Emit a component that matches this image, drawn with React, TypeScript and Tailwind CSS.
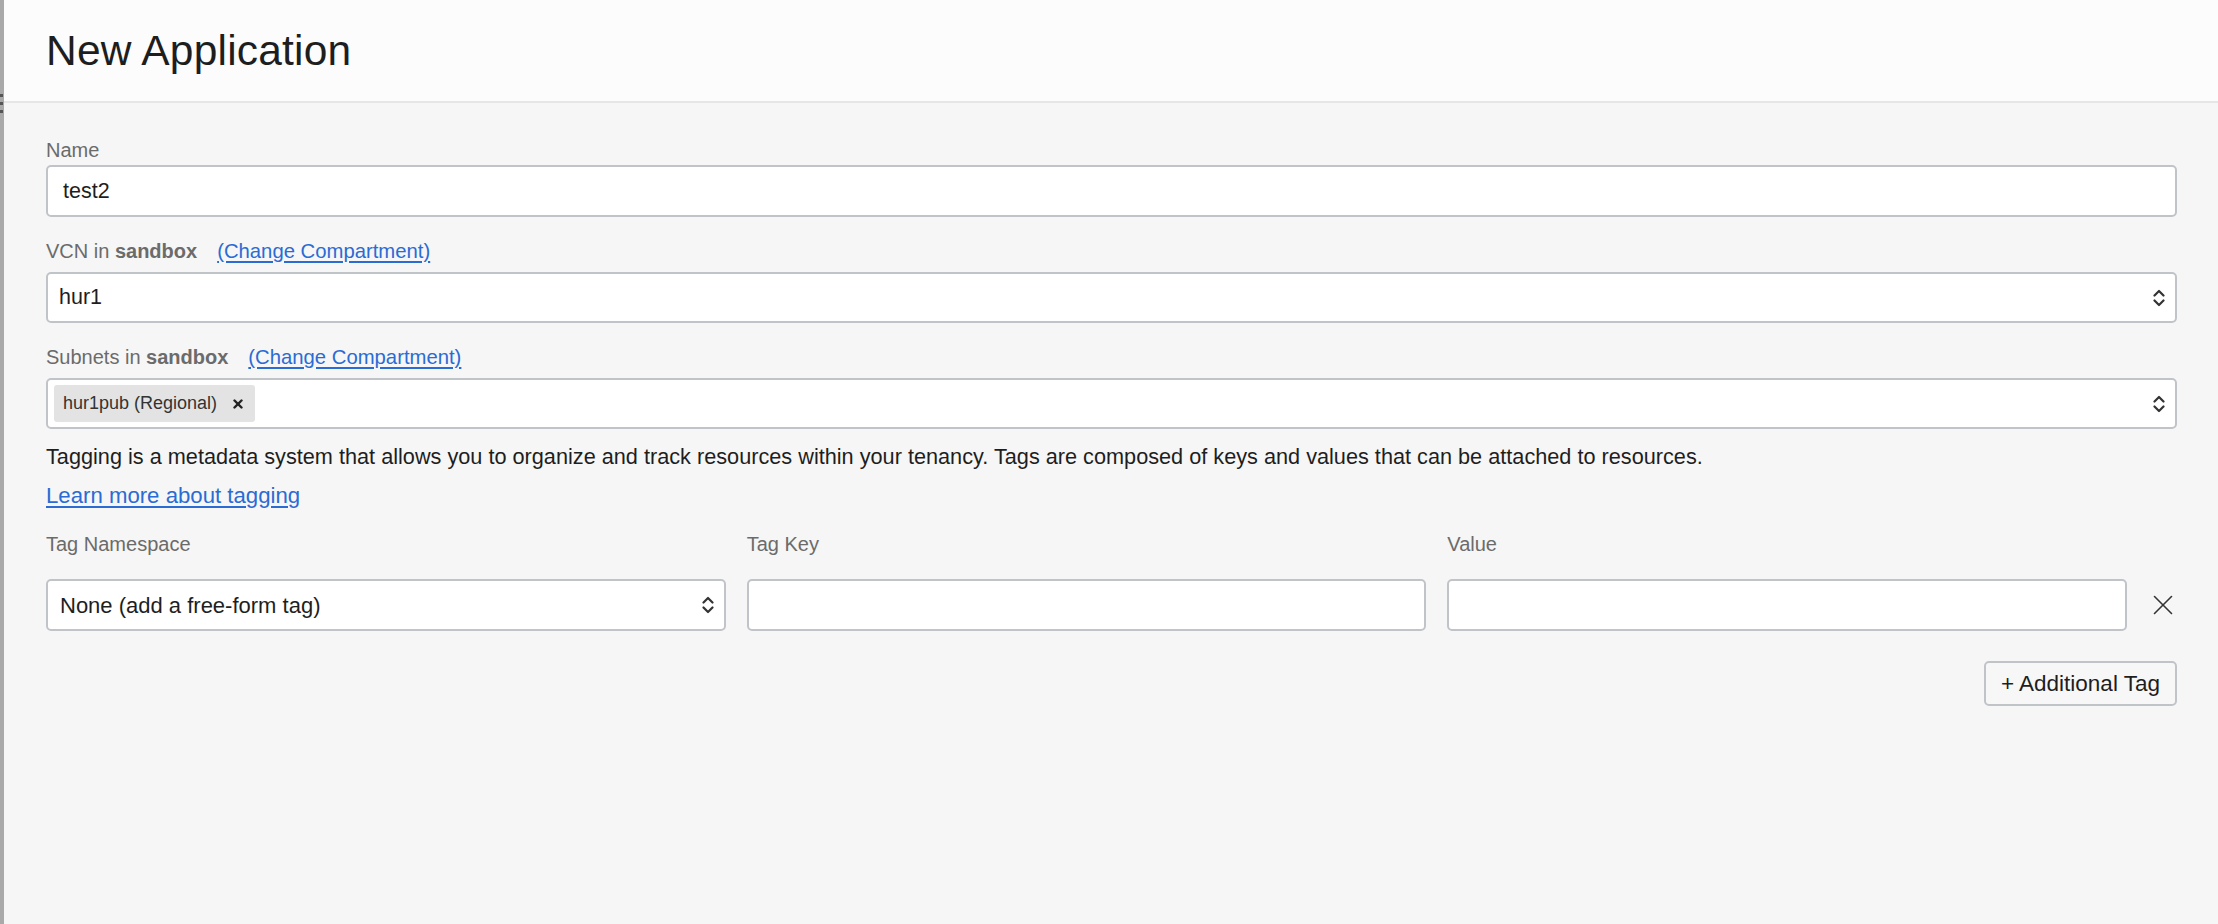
import { ReactNode } from "react";

const Chevrons = () => (
  <svg width="12" height="20" viewBox="0 0 12 20" fill="none" stroke="#333" strokeWidth="2.2" strokeLinecap="round" strokeLinejoin="round">
    <polyline points="1.5,7.5 6,3 10.5,7.5" />
    <polyline points="1.5,12.5 6,17 10.5,12.5" />
  </svg>
);

const FieldLabel = ({ children, link }: { children: ReactNode; link?: boolean }) => (
  <div className="flex items-center gap-[20px] h-[24px] leading-[24px] text-[20px] text-[#6b6b6b]">
    <span>{children}</span>
    {link && <a className="text-[#2a6bd4] text-[20.3px] underline underline-offset-[3px]">(Change Compartment)</a>}
  </div>
);

const Box = ({ children, select, className = "" }: { children?: ReactNode; select?: boolean; className?: string }) => (
  <div className={`flex items-center bg-white border-2 border-[#c0c4c9] rounded-[5px] text-[21.5px] text-[#1e1e1e] ${className}`}>
    <div className="flex-1 flex items-center min-w-0">{children}</div>
    {select && (
      <div className="pr-[10px] flex items-center">
        <Chevrons />
      </div>
    )}
  </div>
);

export default function App() {
  return (
    <div className="flex min-h-[924px] bg-[#f6f6f6] font-['Liberation_Sans',Arial,sans-serif]">
      <div className="relative w-[4px] shrink-0 bg-[#a9a9a9]">
        <div className="absolute left-0 top-[94px] flex flex-col gap-[5px]">
          <span className="block w-[3px] h-[3px] bg-[#555]" />
          <span className="block w-[3px] h-[3px] bg-[#555]" />
          <span className="block w-[3px] h-[3px] bg-[#555]" />
        </div>
      </div>

      <div className="flex-1 flex flex-col">
        <header className="h-[103px] flex items-center pl-[42px] bg-[#fcfcfc] border-b-2 border-[#e6e6e6]">
          <h1 className="text-[42.5px] text-[#1e1e1e] tracking-[0.2px]">New Application</h1>
        </header>

        <main className="flex flex-col pl-[42px] pr-[41px] pt-[35px]">
          <FieldLabel>Name</FieldLabel>
          <Box className="mt-[3px] h-[52px] pl-[15px]">test2</Box>

          <div className="mt-[22px]">
            <FieldLabel link>
              VCN in <b className="font-bold">sandbox</b>
            </FieldLabel>
          </div>
          <Box select className="mt-[9px] h-[51px] pl-[11px]">hur1</Box>

          <div className="mt-[22px]">
            <FieldLabel link>
              Subnets in <b className="font-bold">sandbox</b>
            </FieldLabel>
          </div>
          <Box select className="mt-[9px] h-[51px] pl-[6px]">
            <span className="flex items-center h-[37px] pl-[9px] pr-[12px] gap-[16px] bg-[#e3e3e3] rounded-[3px] text-[18px] text-[#333]">
              hur1pub (Regional)
              <svg width="10" height="10" viewBox="0 0 10 10" stroke="#222" strokeWidth="2.4" strokeLinecap="round">
                <line x1="1.5" y1="1.5" x2="8.5" y2="8.5" />
                <line x1="8.5" y1="1.5" x2="1.5" y2="8.5" />
              </svg>
            </span>
          </Box>

          <p className="mt-[16px] leading-[24px] text-[21.7px] text-[#1e1e1e]">
            Tagging is a metadata system that allows you to organize and track resources within your tenancy. Tags are composed of keys and values that can be attached to resources.
          </p>
          <a className="mt-[15px] self-start leading-[24px] text-[22.2px] text-[#2a6bd4] underline underline-offset-[3px]">
            Learn more about tagging
          </a>

          <div className="mt-[24px] flex">
            <div className="flex-1 grid grid-cols-3 gap-x-[21px]">
              <FieldLabel>Tag Namespace</FieldLabel>
              <FieldLabel>Tag Key</FieldLabel>
              <FieldLabel>Value</FieldLabel>
              <Box select className="mt-[23px] h-[52px] pl-[12px]">
                <span className="text-[22px]">None (add a free-form tag)</span>
              </Box>
              <Box className="mt-[23px] h-[52px]" />
              <Box className="mt-[23px] h-[52px]" />
            </div>
            <div className="w-[50px] flex items-end justify-end pr-[4px] pb-[16px]">
              <svg width="20" height="20" viewBox="0 0 20 20" stroke="#333" strokeWidth="1.6" strokeLinecap="round">
                <line x1="1.5" y1="1.5" x2="18.5" y2="18.5" />
                <line x1="18.5" y1="1.5" x2="1.5" y2="18.5" />
              </svg>
            </div>
          </div>

          <button className="mt-[30px] self-end h-[45px] px-[15px] border-2 border-[#c0c4c9] rounded-[5px] bg-[#f7f7f7] text-[22.5px] text-[#1e1e1e]">
            + Additional Tag
          </button>
        </main>
      </div>
    </div>
  );
}
